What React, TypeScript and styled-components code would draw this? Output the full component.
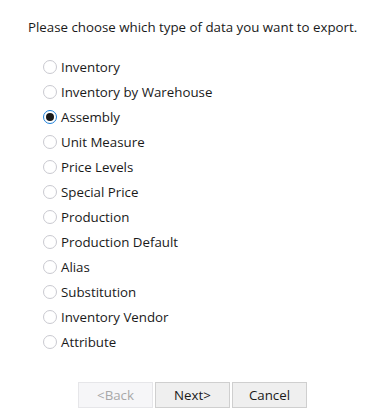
import styled, { createGlobalStyle } from "styled-components";

const GlobalStyle = createGlobalStyle`
  html, body {
    margin: 0;
    padding: 0;
    background: #ffffff;
  }
  body {
    font-family: "Open Sans", "Noto Sans", sans-serif;
    color: #1a1a1a;
  }
`;

const options = [
  "Inventory",
  "Inventory by Warehouse",
  "Assembly",
  "Unit Measure",
  "Price Levels",
  "Special Price",
  "Production",
  "Production Default",
  "Alias",
  "Substitution",
  "Inventory Vendor",
  "Attribute",
];

export default function App() {
  const selected = "Assembly";
  return (
    <>
      <GlobalStyle />
      <Page>
        <Prompt>Please choose which type of data you want to export.</Prompt>
        <OptionList>
          {options.map((label) => (
            <Option key={label}>
              <Radio $checked={label === selected} />
              <span>{label}</span>
            </Option>
          ))}
        </OptionList>
        <ButtonBar>
          <WizardButton disabled>&lt;Back</WizardButton>
          <WizardButton>Next&gt;</WizardButton>
          <WizardButton>Cancel</WizardButton>
        </ButtonBar>
      </Page>
    </>
  );
}

const Page = styled.div`
  width: 389px;
  height: 412px;
  box-sizing: border-box;
  padding: 18px 0 0 28px;
  display: flex;
  flex-direction: column;
  overflow: hidden;
`;

const Prompt = styled.div`
  font-size: 13.3px;
  line-height: 18px;
`;

const OptionList = styled.div`
  display: flex;
  flex-direction: column;
  margin: 18px 0 0 15px;
`;

const Option = styled.label`
  display: flex;
  align-items: center;
  gap: 4px;
  height: 25px;
  font-size: 13.3px;
`;

const Radio = styled.span<{ $checked?: boolean }>`
  box-sizing: border-box;
  width: 14px;
  height: 14px;
  border-radius: 50%;
  background: #ffffff;
  border: 1px solid ${(p) => (p.$checked ? "#1e7fd8" : "#c9c9d0")};
  position: relative;
  &::after {
    content: "";
    display: ${(p) => (p.$checked ? "block" : "none")};
    position: absolute;
    left: 2px;
    top: 2px;
    width: 8px;
    height: 8px;
    border-radius: 50%;
    background: #1a1a1a;
  }
`;

const ButtonBar = styled.div`
  display: flex;
  gap: 2px;
  margin: 28px 0 0 50px;
`;

const WizardButton = styled.button`
  box-sizing: border-box;
  width: 75px;
  height: 26px;
  padding: 0;
  font-family: inherit;
  font-size: 13.3px;
  color: #1a1a1a;
  background: #efefef;
  border: 1px solid #cfcfcf;
  border-radius: 0;
  &:disabled {
    color: #a8a8a8;
    background: #f6f6f8;
    border-color: #e6e6e9;
  }
`;
